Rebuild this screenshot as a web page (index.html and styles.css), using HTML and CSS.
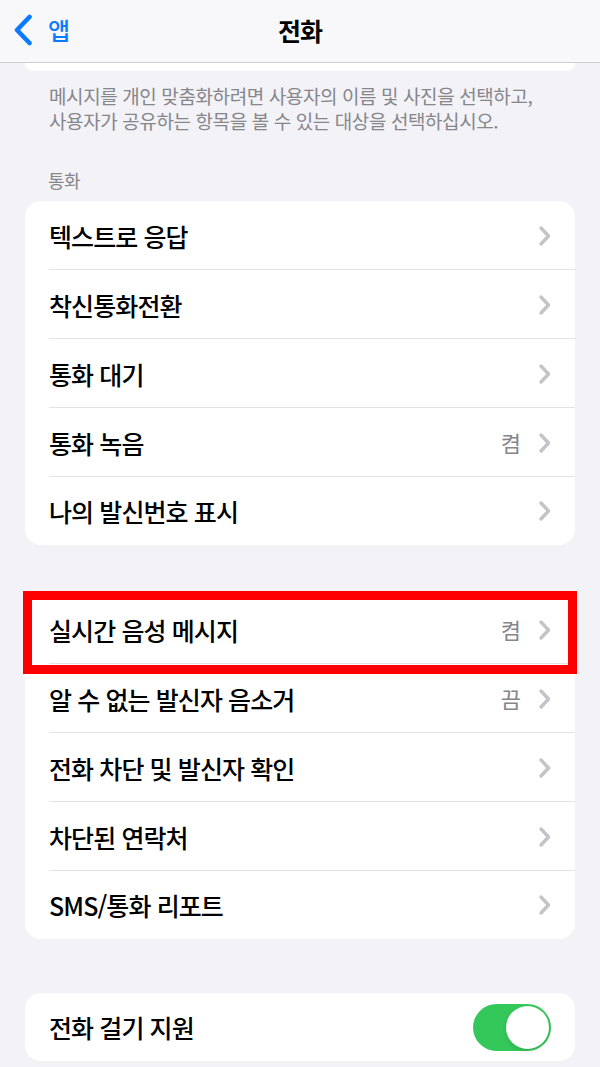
FILE: index.html
```html
<!DOCTYPE html>
<html lang="ko">
<head>
<meta charset="utf-8">
<title>전화</title>
<link rel="stylesheet" href="styles.css">
</head>
<body>
<header class="navbar">
  <div class="back">
    <svg class="back-icon" width="20" height="32" viewBox="0 0 20 32"><path d="M16.5 3 L4 16 L16.5 29" fill="none" stroke="#0a7aff" stroke-width="4.6" stroke-linecap="round" stroke-linejoin="round"/></svg>
    <span class="back-label">앱</span>
  </div>
  <div class="title">전화</div>
</header>
<main class="content">
  <div class="card-stub"></div>
  <p class="footnote">메시지를 개인 맞춤화하려면 사용자의 이름 및 사진을 선택하고,<br>사용자가 공유하는 항목을 볼 수 있는 대상을 선택하십시오.</p>
  <div class="section-title">통화</div>
  <ul class="card card-first">
    <li class="row"><span class="label">텍스트로 응답</span><span class="accessory"><svg class="chev" width="14" height="22" viewBox="0 0 14 22"><path d="M3 3 L10.5 11 L3 19" fill="none" stroke="#c4c4c7" stroke-width="3.4" stroke-linecap="round" stroke-linejoin="round"/></svg></span></li>
    <li class="row"><span class="label">착신통화전환</span><span class="accessory"><svg class="chev" width="14" height="22" viewBox="0 0 14 22"><path d="M3 3 L10.5 11 L3 19" fill="none" stroke="#c4c4c7" stroke-width="3.4" stroke-linecap="round" stroke-linejoin="round"/></svg></span></li>
    <li class="row"><span class="label">통화 대기</span><span class="accessory"><svg class="chev" width="14" height="22" viewBox="0 0 14 22"><path d="M3 3 L10.5 11 L3 19" fill="none" stroke="#c4c4c7" stroke-width="3.4" stroke-linecap="round" stroke-linejoin="round"/></svg></span></li>
    <li class="row"><span class="label">통화 녹음</span><span class="accessory"><span class="value">켬</span><svg class="chev" width="14" height="22" viewBox="0 0 14 22"><path d="M3 3 L10.5 11 L3 19" fill="none" stroke="#c4c4c7" stroke-width="3.4" stroke-linecap="round" stroke-linejoin="round"/></svg></span></li>
    <li class="row"><span class="label">나의 발신번호 표시</span><span class="accessory"><svg class="chev" width="14" height="22" viewBox="0 0 14 22"><path d="M3 3 L10.5 11 L3 19" fill="none" stroke="#c4c4c7" stroke-width="3.4" stroke-linecap="round" stroke-linejoin="round"/></svg></span></li>
  </ul>
  <ul class="card card-second">
    <li class="row highlighted"><span class="label">실시간 음성 메시지</span><span class="accessory"><span class="value">켬</span><svg class="chev" width="14" height="22" viewBox="0 0 14 22"><path d="M3 3 L10.5 11 L3 19" fill="none" stroke="#c4c4c7" stroke-width="3.4" stroke-linecap="round" stroke-linejoin="round"/></svg></span><span class="highlight-box"></span></li>
    <li class="row"><span class="label">알 수 없는 발신자 음소거</span><span class="accessory"><span class="value">끔</span><svg class="chev" width="14" height="22" viewBox="0 0 14 22"><path d="M3 3 L10.5 11 L3 19" fill="none" stroke="#c4c4c7" stroke-width="3.4" stroke-linecap="round" stroke-linejoin="round"/></svg></span></li>
    <li class="row"><span class="label">전화 차단 및 발신자 확인</span><span class="accessory"><svg class="chev" width="14" height="22" viewBox="0 0 14 22"><path d="M3 3 L10.5 11 L3 19" fill="none" stroke="#c4c4c7" stroke-width="3.4" stroke-linecap="round" stroke-linejoin="round"/></svg></span></li>
    <li class="row"><span class="label">차단된 연락처</span><span class="accessory"><svg class="chev" width="14" height="22" viewBox="0 0 14 22"><path d="M3 3 L10.5 11 L3 19" fill="none" stroke="#c4c4c7" stroke-width="3.4" stroke-linecap="round" stroke-linejoin="round"/></svg></span></li>
    <li class="row"><span class="label">SMS/통화 리포트</span><span class="accessory"><svg class="chev" width="14" height="22" viewBox="0 0 14 22"><path d="M3 3 L10.5 11 L3 19" fill="none" stroke="#c4c4c7" stroke-width="3.4" stroke-linecap="round" stroke-linejoin="round"/></svg></span></li>
  </ul>
  <ul class="card card-third">
    <li class="row"><span class="label">전화 걸기 지원</span><span class="toggle on"><span class="knob"></span></span></li>
  </ul>
</main>
</body>
</html>
```
FILE: styles.css
```css
* { box-sizing: border-box; }
html, body { margin: 0; padding: 0; }
body {
  width: 600px;
  height: 1067px;
  overflow: hidden;
  background: #f2f2f7;
  font-family: "Noto Sans CJK KR", "Noto Sans", "Liberation Sans", sans-serif;
  color: #000;
}
.navbar {
  height: 63px;
  background: #f8f8fa;
  border-bottom: 1px solid #cfcfd3;
  display: flex;
  align-items: center;
  justify-content: center;
  position: relative;
}
.back {
  position: absolute;
  left: 13px;
  top: 14px;
  display: flex;
  align-items: center;
  gap: 15px;
}
.back-icon { display: block; }
.back-label {
  color: #0a7aff;
  font-size: 24px;
  font-weight: 500;
  line-height: 32px;
  letter-spacing: -1px;
}
.title {
  font-size: 25px;
  font-weight: 700;
  letter-spacing: -1px;
  line-height: 32px;
  margin-top: -2px;
}
.content { padding: 0; }
.card-stub {
  height: 8px;
  margin: 0 25px;
  background: #fff;
  border-radius: 0 0 16px 16px;
}
.footnote {
  margin: 13px 0 0;
  padding: 0 30px 0 49px;
  font-size: 19px;
  line-height: 24.5px;
  letter-spacing: -0.4px;
  color: #86868b;
}
.section-title {
  margin: 36px 0 0;
  padding-left: 48px;
  font-size: 18px;
  line-height: 22px;
  letter-spacing: -0.5px;
  color: #86868b;
}
.card {
  list-style: none;
  margin: 0 25px;
  padding: 0;
  background: #fff;
  border-radius: 16px;
}
.card-first { margin-top: 10px; }
.card-second { margin-top: 50px; }
.card-third { margin-top: 54px; }
.row {
  position: relative;
  height: 69px;
  display: flex;
  align-items: center;
  justify-content: space-between;
  padding: 0 24px;
}
.row::after {
  content: "";
  position: absolute;
  left: 24px;
  right: 0;
  bottom: 0;
  height: 1px;
  background: #e2e2e5;
}
.row:last-child { height: 68px; }
.row:last-child::after { display: none; }
.label {
  font-size: 25px;
  font-weight: 500;
  line-height: 32px;
  letter-spacing: -0.9px;
  margin-top: 0;
}
.accessory {
  display: flex;
  align-items: center;
  gap: 17px;
}
.value {
  font-size: 22px;
  line-height: 30px;
  color: #86868b;
  margin-top: -1px;
}
.chev { display: block; margin-right: -1px; }
.highlight-box {
  position: absolute;
  left: -2px;
  right: -2px;
  top: -4px;
  bottom: -10px;
  border: 9px solid #ff0000;
  pointer-events: none;
  z-index: 2;
}
.toggle {
  width: 78px;
  height: 47px;
  border-radius: 24px;
  background: #34c759;
  position: relative;
  display: block;
}
.toggle .knob {
  position: absolute;
  right: 2px;
  top: 2px;
  width: 43px;
  height: 43px;
  border-radius: 50%;
  background: #fff;
  box-shadow: 0 2px 4px rgba(0,0,0,0.12);
}
```
